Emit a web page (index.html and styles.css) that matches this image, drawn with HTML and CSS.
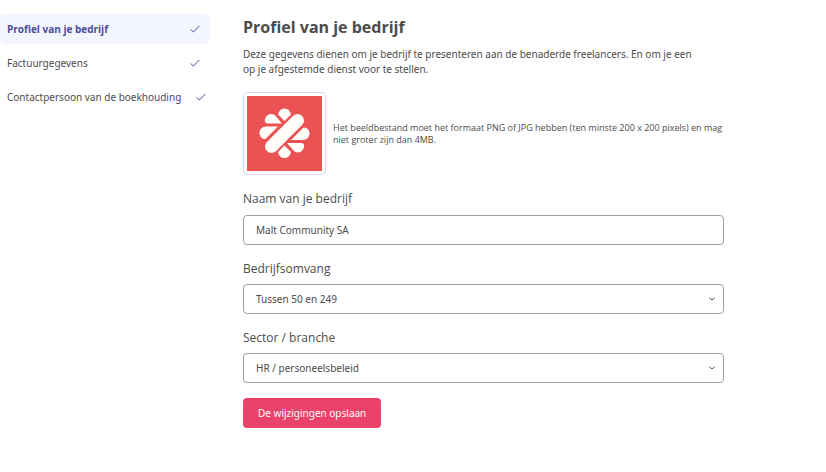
FILE: index.html
```html
<!DOCTYPE html>
<html lang="nl">
<head>
<meta charset="utf-8">
<meta name="viewport" content="width=device-width, initial-scale=1">
<title>Profiel van je bedrijf</title>
<link rel="stylesheet" href="styles.css">
</head>
<body>
<div class="page">
  <nav class="menu">
    <a class="menu-item active" href="#profiel" aria-current="page">Profiel van je bedrijf
      <svg class="check" viewBox="0 0 10 8" aria-hidden="true"><path d="M.6 4.4 3.4 7 9.4 1"/></svg></a>
    <a class="menu-item" href="#factuur">Factuurgegevens
      <svg class="check" viewBox="0 0 10 8" aria-hidden="true"><path d="M.6 4.4 3.4 7 9.4 1"/></svg></a>
    <a class="menu-item" href="#contact">Contactpersoon van de boekhouding
      <svg class="check" viewBox="0 0 10 8" aria-hidden="true"><path d="M.6 4.4 3.4 7 9.4 1"/></svg></a>
  </nav>
  <main class="content">
    <h1>Profiel van je bedrijf</h1>
    <p class="intro">Deze gegevens dienen om je bedrijf te presenteren aan de benaderde freelancers. En om je een<br>op je afgestemde dienst voor te stellen.</p>
    <div class="upload">
      <div class="logo">
        <svg viewBox="0 0 75 75" role="img" aria-label="Logo">
          <rect width="75" height="75" fill="#ea5254"/>
          <g fill="#fffdf8">
            <path d="M31 18.500C32 14.500 34 12.500 37.500 12.500S43 14.500 44 18.500L37.500 25Z"/>
            <path d="M31 56C32 60 34 62 37.500 62S43 60 44 56L37.500 49.500Z"/>
            <path d="M35 27.500H21C17.500 27.500 17 24 19 21C21.500 17.500 26 17 29 20.500Z"/>
            <path d="M31 30.500 18.500 43C15 43.500 12.500 40.500 12.500 37C12.500 33.500 15 30.500 19 30.500Z"/>
            <path d="M40 47H54C57.500 47 58 50.500 56 53.500C53.500 57 49 57.500 46 54Z"/>
            <path d="M44 44 56.500 31.500C60 31 62.500 34 62.500 37.500C62.500 41 60 44 56 44Z"/>
          </g>
          <path d="M24.500 50.500 50.500 24.500" stroke="#fffdf8" stroke-width="13" stroke-linecap="round"/>
        </svg>
      </div>
      <p class="hint">Het beeldbestand moet het formaat PNG of JPG hebben (ten minste 200 x 200 pixels) en mag niet groter zijn dan 4MB.</p>
    </div>
    <form class="form">
      <div class="field">
        <label for="naam">Naam van je bedrijf</label>
        <input class="control" id="naam" type="text" value="Malt Community SA">
      </div>
      <div class="field">
        <label for="omvang">Bedrijfsomvang</label>
        <div class="select">
          <select class="control" id="omvang"><option>Tussen 50 en 249</option></select>
          <svg class="chevron" viewBox="0 0 6 4" aria-hidden="true"><path d="M.5.8 3 3 5.500.8"/></svg>
        </div>
      </div>
      <div class="field">
        <label for="sector">Sector / branche</label>
        <div class="select">
          <select class="control" id="sector"><option>HR / personeelsbeleid</option></select>
          <svg class="chevron" viewBox="0 0 6 4" aria-hidden="true"><path d="M.5.8 3 3 5.500.8"/></svg>
        </div>
      </div>
      <button class="save" type="button">De wijzigingen opslaan</button>
    </form>
  </main>
</div>
</body>
</html>
```
FILE: styles.css
```css
* { box-sizing: border-box; }
body {
  margin: 0;
  background: #fff;
  color: #4c4c4c;
  font: 10px/15px "Noto Sans", "Open Sans", sans-serif;
}
h1, p { margin: 0; }
.page {
  display: grid;
  grid-template-columns: 210px minmax(0, 481px);
  column-gap: 33px;
  padding: 14px 16px 16px 0;
}
.menu {
  display: flex;
  flex-direction: column;
  gap: 4px;
}
.menu-item {
  display: flex;
  align-items: center;
  justify-content: space-between;
  gap: 15px;
  height: 30px;
  padding: 0 10px 0 7px;
  border-radius: 5px;
  color: inherit;
  text-decoration: none;
  white-space: nowrap;
}
.menu-item.active {
  background: #f3f6ff;
  color: #474d99;
  font-family: "Open Sans", sans-serif;
  font-weight: 700;
}
.check {
  flex: none;
  width: 10px;
  height: 8px;
  fill: none;
  stroke: #474d99;
}
h1 {
  padding-top: 2px;
  font-family: "Open Sans", sans-serif;
  font-size: 16px;
  line-height: 22px;
}
.intro { margin-top: 9px; }
.upload {
  display: flex;
  align-items: center;
  gap: 7px;
  margin-top: 15px;
}
.logo {
  flex: none;
  padding: 3px;
  border: 1px solid #d3dbfb;
  border-radius: 4px;
}
.logo svg {
  display: block;
  width: 75px;
  height: 75px;
  fill: none;
}
.hint {
  font-family: "Open Sans", sans-serif;
  font-size: 9px;
  line-height: 12px;
}
.form { margin-top: 15px; }
.field { margin-bottom: 15px; }
.field label {
  display: block;
  margin-bottom: 8px;
  font-family: "Open Sans", sans-serif;
  font-size: 12px;
  line-height: 17px;
}
.field + .field label { margin-bottom: 7px; }
.control {
  display: block;
  width: 100%;
  height: 30px;
  padding: 0 12px;
  border: 1px solid #a0a0a0;
  border-radius: 4px;
  background: #fff;
  color: inherit;
  font: inherit;
  appearance: none;
}
.select { position: relative; }
.chevron {
  position: absolute;
  top: 13px;
  right: 9px;
  width: 6px;
  height: 4px;
  fill: none;
  stroke: #4c4c4c;
  pointer-events: none;
}
.save {
  height: 30px;
  padding: 0 15px;
  border: 0;
  border-radius: 4px;
  background: #eb4269;
  color: #fff;
  font: inherit;
}
```
